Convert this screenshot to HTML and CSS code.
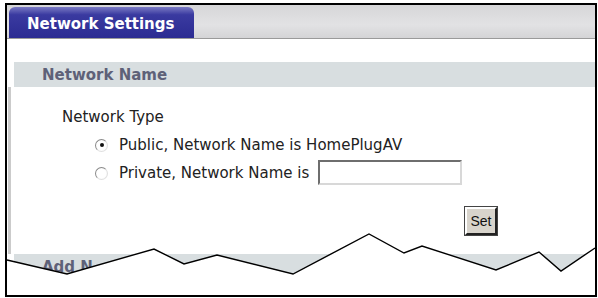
FILE: index.html
```html
<!DOCTYPE html>
<html lang="en">
<head>
    <meta charset="UTF-8">
    <title>Network Settings</title>
    <link rel="stylesheet" href="styles.css">
</head>
<body>
    <div class="frame">
        <div class="tabbar">
            <div class="tab">Network Settings</div>
        </div>

        <div class="page">
            <div class="section-head">Network Name</div>
            <div class="section-body">
                <p class="label">Network Type</p>
                <label class="option">
                    <input type="radio" name="nettype" checked>
                    <span>Public, Network Name is HomePlugAV</span>
                </label>
                <label class="option">
                    <input type="radio" name="nettype">
                    <span>Private, Network Name is</span>
                    <input type="text" class="name-input">
                </label>
                <div class="actions">
                    <button class="btn">Set</button>
                </div>
            </div>
            <div class="section-head">Add N</div>
        </div>
    </div>

    <!-- torn edge of the screenshot -->
    <svg class="tear" width="598" height="298" viewBox="0 0 598 298">
        <polygon fill="#fff" points="7,260 67,274 154,249 184,264 217,255 293,274 369,234 404,253 422,246 496,270 539,252 561,271 595,248 595,295 7,295"/>
        <polyline fill="none" stroke="#000" stroke-width="1.4" points="7,260 67,274 154,249 184,264 217,255 293,274 369,234 404,253 422,246 496,270 539,252 561,271 595,248"/>
    </svg>
</body>
</html>
```

FILE: styles.css
```css
*{
    margin: 0;
    padding: 0;
    box-sizing: border-box;
}

body{
    position: relative;
    width: 598px;
    height: 298px;
    background-color: #fff;
    font-family: "DejaVu Sans", Verdana, sans-serif;
    font-size: 15px;
    color: #222;
    overflow: hidden;
}

.frame{
    margin: 3px 1px 0 5px;
    width: 592px;
    height: 294px;
    border: 2px solid #000;
    overflow: hidden;
}

.tabbar{
    height: 34px;
    padding: 2px 0 0 2px;
    background: linear-gradient(#d6d6d8, #e2e2e4 60%, #d4d4d6);
    border-bottom: 1px solid #9a9a9a;
}

.tab{
    width: 185px;
    height: 31px;
    padding: 8px 0 0 18px;
    border-radius: 6px 6px 0 0;
    background: linear-gradient(#7a7ac4, #3a3aa0 25%, #2b2b92);
    color: #fff;
    font-weight: bold;
    font-size: 15px;
    line-height: 18px;
    white-space: nowrap;
}

.page{
    padding: 23px 0 0 7px;
}

.section-head{
    height: 25px;
    padding: 4px 0 0 28px;
    line-height: 19px;
    background-color: #d8dee0;
    color: #5e6178;
    font-weight: bold;
    font-size: 15px;
}

.section-body{
    margin-left: -6px;
    padding: 20px 0 19px 51px;
    border-left: 3px solid #cbcbcb;
}

.label{
    line-height: 20px;
}

.option{
    display: flex;
    align-items: center;
    height: 28px;
    padding-left: 33px;
    white-space: nowrap;
}

.option:first-of-type{
    margin-top: 4px;
}

.option input[type="radio"]{
    appearance: none;
    flex: none;
    width: 13px;
    height: 13px;
    margin-right: 11px;
    border-radius: 50%;
    border: 1px solid #8a8a8a;
    border-right-color: #e0e0e0;
    border-bottom-color: #e0e0e0;
    background: radial-gradient(circle, #fff 55%, #e8e8e8);
    position: relative;
}

.option input[type="radio"]:checked::after{
    content: "";
    position: absolute;
    left: 3.5px;
    top: 3.5px;
    width: 4px;
    height: 4px;
    border-radius: 50%;
    background-color: #111;
}

.name-input{
    flex: none;
    width: 144px;
    height: 25px;
    margin: 0 0 2px 9px;
    border: 2px solid;
    border-color: #6e6e6e #d8d8d8 #d8d8d8 #6e6e6e;
    background-color: #fff;
}

.actions{
    padding: 20px 0 0 403px;
}

.btn{
    width: 32px;
    height: 28px;
    background-color: #d8d4cc;
    border: 2px solid;
    border-color: #fff #222 #222 #fff;
    outline: 1px solid #444;
    font-family: "Liberation Sans", Arial, sans-serif;
    font-size: 14px;
    color: #111;
}

.tear{
    position: absolute;
    left: 0;
    top: 0;
    pointer-events: none;
}
```
